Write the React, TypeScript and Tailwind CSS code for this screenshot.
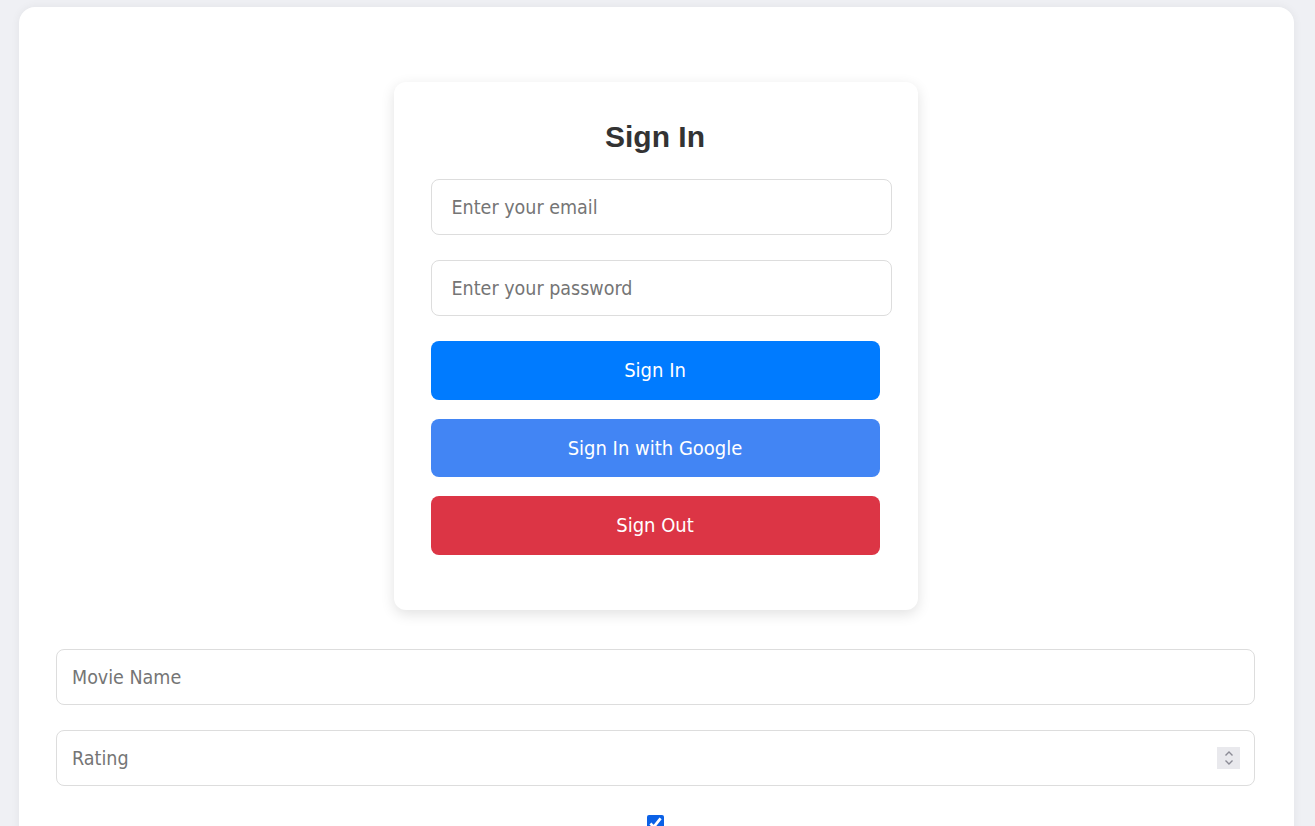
import React from "react";

export default function App() {
  const font = "font-['Tahoma','DejaVu_Sans_Condensed','DejaVu_Sans',sans-serif]";
  return (
    <div className={`min-h-[826px] bg-[#eff0f4] pt-[7px] pl-[19px] pr-[21px] ${font}`}>
      <div className="bg-white rounded-[16px] shadow-[0_0_10px_rgba(0,0,0,0.06)] pl-[37px] pr-[39px] pt-[75px] pb-[40px]">
        <div className="mx-auto w-[524px] bg-white rounded-[12px] shadow-[0_4px_14px_rgba(0,0,0,0.12)] pl-[37px] pr-[38px] pt-[36px] pb-[55.5px]">
          <h2 className="text-center text-[30px] leading-[38px] font-bold text-[#333] font-['Liberation_Sans',Arial,sans-serif]">
            Sign In
          </h2>
          <div className="mt-[23px] flex flex-col gap-[25px] w-[461px]">
            <input
              type="email"
              placeholder="Enter your email"
              className="h-[56px] w-full rounded-[8px] border border-[#ddd] px-[20px] text-[19.5px] placeholder:text-[#757575] outline-none"
            />
            <input
              type="password"
              placeholder="Enter your password"
              className="h-[56px] w-full rounded-[8px] border border-[#ddd] px-[20px] text-[19.5px] placeholder:text-[#757575] outline-none"
            />
          </div>
          <div className="mt-[25px] flex flex-col gap-[19px] w-[449px]">
            <button className="h-[58.5px] w-full rounded-[8px] bg-[#007bff] text-white text-[20px]">Sign In</button>
            <button className="h-[58.5px] w-full rounded-[8px] bg-[#4285f4] text-white text-[20px]">Sign In with Google</button>
            <button className="h-[58.5px] w-full rounded-[8px] bg-[#dc3545] text-white text-[20px]">Sign Out</button>
          </div>
        </div>
        <div className="mt-[39px] flex flex-col gap-[25px]">
          <input
            type="text"
            placeholder="Movie Name"
            className="h-[56px] w-full rounded-[8px] border border-[#ddd] px-[15px] text-[19.5px] placeholder:text-[#757575] outline-none"
          />
          <div className="relative">
            <input
              type="text"
              placeholder="Rating"
              className="h-[56px] w-full rounded-[8px] border border-[#ddd] px-[15px] text-[19.5px] placeholder:text-[#757575] outline-none"
            />
            <div className="absolute right-[15px] top-[17px] w-[23px] h-[22px] bg-[#e9e9ed] flex items-center justify-center">
              <svg width="10" height="16" viewBox="0 0 10 16" fill="none" stroke="#8b8b95" strokeWidth="1.4">
                <path d="M1.5 5.5 L5 2 L8.5 5.5" />
                <path d="M1.5 10.5 L5 14 L8.5 10.5" />
              </svg>
            </div>
          </div>
        </div>
        <div className="mt-[29px] flex justify-center">
          <input type="checkbox" defaultChecked className="w-[17px] h-[17px] accent-[#0b61e6]" />
        </div>
      </div>
    </div>
  );
}
